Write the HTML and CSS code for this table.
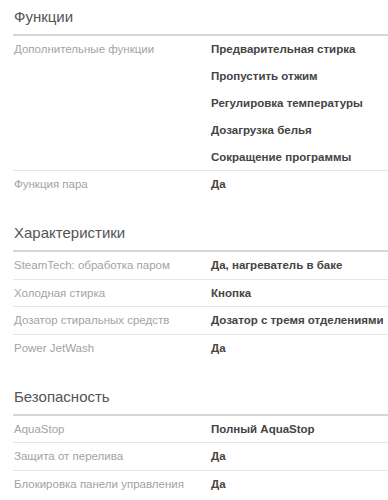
FILE: index.html
```html
<!DOCTYPE html>
<html lang="ru">
<head>
<meta charset="utf-8">
<title>Характеристики</title>
<link rel="stylesheet" href="styles.css">
</head>
<body>
<section class="spec-group">
  <h2 class="spec-title">Функции</h2>
  <div class="spec-row">
    <div class="spec-name">Дополнительные функции</div>
    <div class="spec-value">
      <span>Предварительная стирка</span>
      <span>Пропустить отжим</span>
      <span>Регулировка температуры</span>
      <span>Дозагрузка белья</span>
      <span>Сокращение программы</span>
    </div>
  </div>
  <div class="spec-row">
    <div class="spec-name">Функция пара</div>
    <div class="spec-value"><span>Да</span></div>
  </div>
</section>
<section class="spec-group">
  <h2 class="spec-title">Характеристики</h2>
  <div class="spec-row">
    <div class="spec-name">SteamTech: обработка паром</div>
    <div class="spec-value"><span>Да, нагреватель в баке</span></div>
  </div>
  <div class="spec-row">
    <div class="spec-name">Холодная стирка</div>
    <div class="spec-value"><span>Кнопка</span></div>
  </div>
  <div class="spec-row">
    <div class="spec-name">Дозатор стиральных средств</div>
    <div class="spec-value"><span>Дозатор с тремя отделениями</span></div>
  </div>
  <div class="spec-row">
    <div class="spec-name">Power JetWash</div>
    <div class="spec-value"><span>Да</span></div>
  </div>
</section>
<section class="spec-group">
  <h2 class="spec-title">Безопасность</h2>
  <div class="spec-row">
    <div class="spec-name">AquaStop</div>
    <div class="spec-value"><span>Полный AquaStop</span></div>
  </div>
  <div class="spec-row">
    <div class="spec-name">Защита от перелива</div>
    <div class="spec-value"><span>Да</span></div>
  </div>
  <div class="spec-row">
    <div class="spec-name">Блокировка панели управления</div>
    <div class="spec-value"><span>Да</span></div>
  </div>
</section>
</body>
</html>
```

FILE: styles.css
```css
html, body {
  margin: 0;
  padding: 0;
  background: #ffffff;
}

body {
  padding-left: 13px;
  font-family: "Liberation Sans", Arial, sans-serif;
  font-size: 11.5px;
}

.spec-group {
  margin-top: 18.5px;
}

.spec-group:first-child {
  margin-top: 0;
}

.spec-title {
  margin: 0;
  padding: 7px 0 7px 1px;
  font-size: 15px;
  line-height: 20px;
  font-weight: normal;
  color: #555555;
  border-bottom: 2px solid #d6d6d6;
}

.spec-row {
  display: grid;
  grid-template-columns: 197px 1fr;
  padding: 6.25px 0 6.25px 1px;
  border-top: 1px solid #e6e6e6;
  line-height: 14px;
}

.spec-title + .spec-row {
  border-top: none;
}

.spec-name {
  color: #a3a3a3;
}

.spec-value {
  display: flex;
  flex-direction: column;
  gap: 12.875px;
  color: #444444;
  font-weight: bold;
  white-space: nowrap;
}
```
